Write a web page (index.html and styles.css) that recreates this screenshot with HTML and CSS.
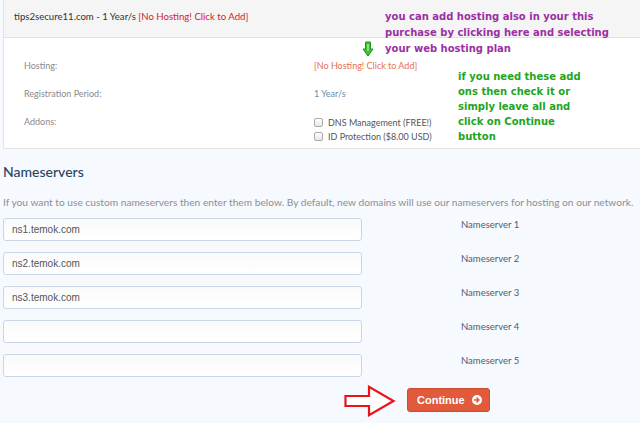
FILE: index.html
```html
<!DOCTYPE html>
<html>
<head>
<meta charset="utf-8">
<link rel="stylesheet" href="styles.css">
</head>
<body>
<div class="page">
  <div class="panel">
    <div class="panel-head">
      <span class="domain">tips2secure11.com - 1 Year/s</span> <span class="nohost">[No Hosting! Click to Add]</span>
    </div>
    <div class="panel-body">
      <div class="row">
        <div class="label">Hosting:</div>
        <div class="value hostlink">[No Hosting! Click to Add]</div>
      </div>
      <div class="row">
        <div class="label">Registration Period:</div>
        <div class="value period">1 Year/s</div>
      </div>
      <div class="row addons-row">
        <div class="label">Addons:</div>
        <div class="value addons">
          <label class="addon"><span class="box"></span>DNS Management (FREE!)</label>
          <label class="addon"><span class="box"></span>ID Protection ($8.00 USD)</label>
        </div>
      </div>
    </div>
  </div>

  <h2 class="ns-title">Nameservers</h2>
  <p class="ns-desc">If you want to use custom nameservers then enter them below. By default, new domains will use our nameservers for hosting on our network.</p>

  <div class="ns-list">
    <div class="ns-row"><div class="ns-input">ns1.temok.com</div><div class="ns-label">Nameserver 1</div></div>
    <div class="ns-row"><div class="ns-input">ns2.temok.com</div><div class="ns-label">Nameserver 2</div></div>
    <div class="ns-row"><div class="ns-input">ns3.temok.com</div><div class="ns-label">Nameserver 3</div></div>
    <div class="ns-row"><div class="ns-input"></div><div class="ns-label">Nameserver 4</div></div>
    <div class="ns-row"><div class="ns-input"></div><div class="ns-label">Nameserver 5</div></div>
  </div>

  <div class="actions">
    <div class="btn">Continue <span class="btn-icon"><svg width="10" height="10" viewBox="0 0 10 10"><circle cx="5" cy="5" r="5" fill="#fff"/><path d="M2.6 5 H6.6 M4.9 3 L7 5 L4.9 7" stroke="#e05a3b" stroke-width="1.6" fill="none" stroke-linecap="round" stroke-linejoin="round"/></svg></span></div>
  </div>

  <div class="note-purple">you can add hosting also in your this<br>purchase by clicking here and selecting<br>your web hosting plan</div>
  <div class="note-green">if you need these add<br>ons then check it or<br>simply leave all and<br>click on Continue<br>button</div>
  <svg class="arrow-down" width="12" height="16" viewBox="0 0 12 16"><path d="M3.5 1 H8.5 V8 H11 L6 15 L1 8 H3.5 Z" fill="#3bbf2f" stroke="#1f9a1c" stroke-width="1"/><path d="M6 3 V10" stroke="#e8f8e6" stroke-width="1"/></svg>
  <svg class="arrow-right" width="52" height="32" viewBox="0 0 52 32"><path d="M1.5 11 H25 V1.8 L49.5 16 L25 30.2 V21 H1.5 Z" fill="#fff" stroke="#e8141c" stroke-width="2.2" stroke-linejoin="miter"/></svg>
</div>
</body>
</html>
```
FILE: styles.css
```css
html, body {
  margin: 0;
  padding: 0;
  background: #f6f9fd;
  overflow: hidden;
}
.page {
  position: relative;
  width: 640px;
  height: 423px;
  padding-left: 3px;
  box-sizing: border-box;
  font-family: "Lato", "Liberation Sans", sans-serif;
}
.panel {
  margin-right: -12px;
  background: #fff;
  border-left: 1px solid #e3e3e3;
  border-bottom: 1px solid #e3e3e3;
}
.panel-head {
  height: 38px;
  box-sizing: border-box;
  background: #f5f5f5;
  border-bottom: 1px solid #e2e2e2;
  padding: 11px 0 0 10px;
  font-size: 9.6px;
  color: #333;
}
.nohost { color: #d4202b; }
.panel-body {
  padding: 22px 0 10px 20px;
  height: 110px;
  box-sizing: border-box;
}
.row {
  display: flex;
  height: 28px;
  font-size: 9px;
}
.label {
  width: 290px;
  color: #8a8a8a;
}
.hostlink { color: #e4704f; }
.period { color: #6e8aa5; }
.addons {
  display: flex;
  flex-direction: column;
  gap: 3px;
  padding-top: 1px;
}
.addon {
  display: flex;
  align-items: center;
  color: #555;
  font-size: 9px;
}
.box {
  width: 7px;
  height: 7px;
  border: 1px solid #aaa;
  border-radius: 2px;
  background: linear-gradient(#fff, #e6e6e6);
  margin-right: 5px;
}
.ns-title {
  margin: 14px 0 0 0;
  font-size: 14px;
  font-weight: 500;
  color: #2a4563;
  line-height: 18px;
}
.ns-desc {
  margin: 15px 0 0 0;
  font-size: 10.2px;
  color: #8a8f96;
  line-height: 12px;
  white-space: nowrap;
}
.ns-list {
  margin-top: 10px;
  display: flex;
  flex-direction: column;
  gap: 11px;
}
.ns-row {
  display: flex;
  height: 23px;
}
.ns-input {
  width: 359px;
  height: 23px;
  box-sizing: border-box;
  border: 1px solid #c9d6e8;
  border-radius: 3px;
  background: linear-gradient(#fafafa, #fff);
  font-family: "Liberation Sans", Arial, sans-serif;
  font-size: 10px;
  color: #555;
  padding: 5px 0 0 8px;
}
.ns-label {
  margin-left: 99px;
  margin-top: 1px;
  font-size: 9.5px;
  color: #4b5d75;
}
.actions {
  margin-top: 11px;
  padding-left: 404px;
}
.btn {
  width: 83px;
  height: 24px;
  box-sizing: border-box;
  background: #e05a3b;
  border: 1px solid #cf4b2d;
  border-radius: 3px;
  color: #fff;
  font-family: "Liberation Sans", Arial, sans-serif;
  font-weight: bold;
  font-size: 11px;
  display: flex;
  align-items: center;
  padding-left: 9px;
}
.btn-icon {
  margin-left: 7px;
  display: flex;
}
.note-purple {
  position: absolute;
  left: 385px;
  top: 9px;
  font-family: "DejaVu Sans", Verdana, sans-serif;
  font-weight: bold;
  font-size: 10px;
  line-height: 16px;
  color: #9b2fa4;
}
.note-green {
  position: absolute;
  left: 458px;
  top: 69px;
  font-family: "DejaVu Sans", Verdana, sans-serif;
  font-weight: bold;
  font-size: 10px;
  line-height: 15px;
  color: #1ea51e;
}
.arrow-down {
  position: absolute;
  left: 362px;
  top: 41px;
}
.arrow-right {
  position: absolute;
  left: 344px;
  top: 385px;
}
```
